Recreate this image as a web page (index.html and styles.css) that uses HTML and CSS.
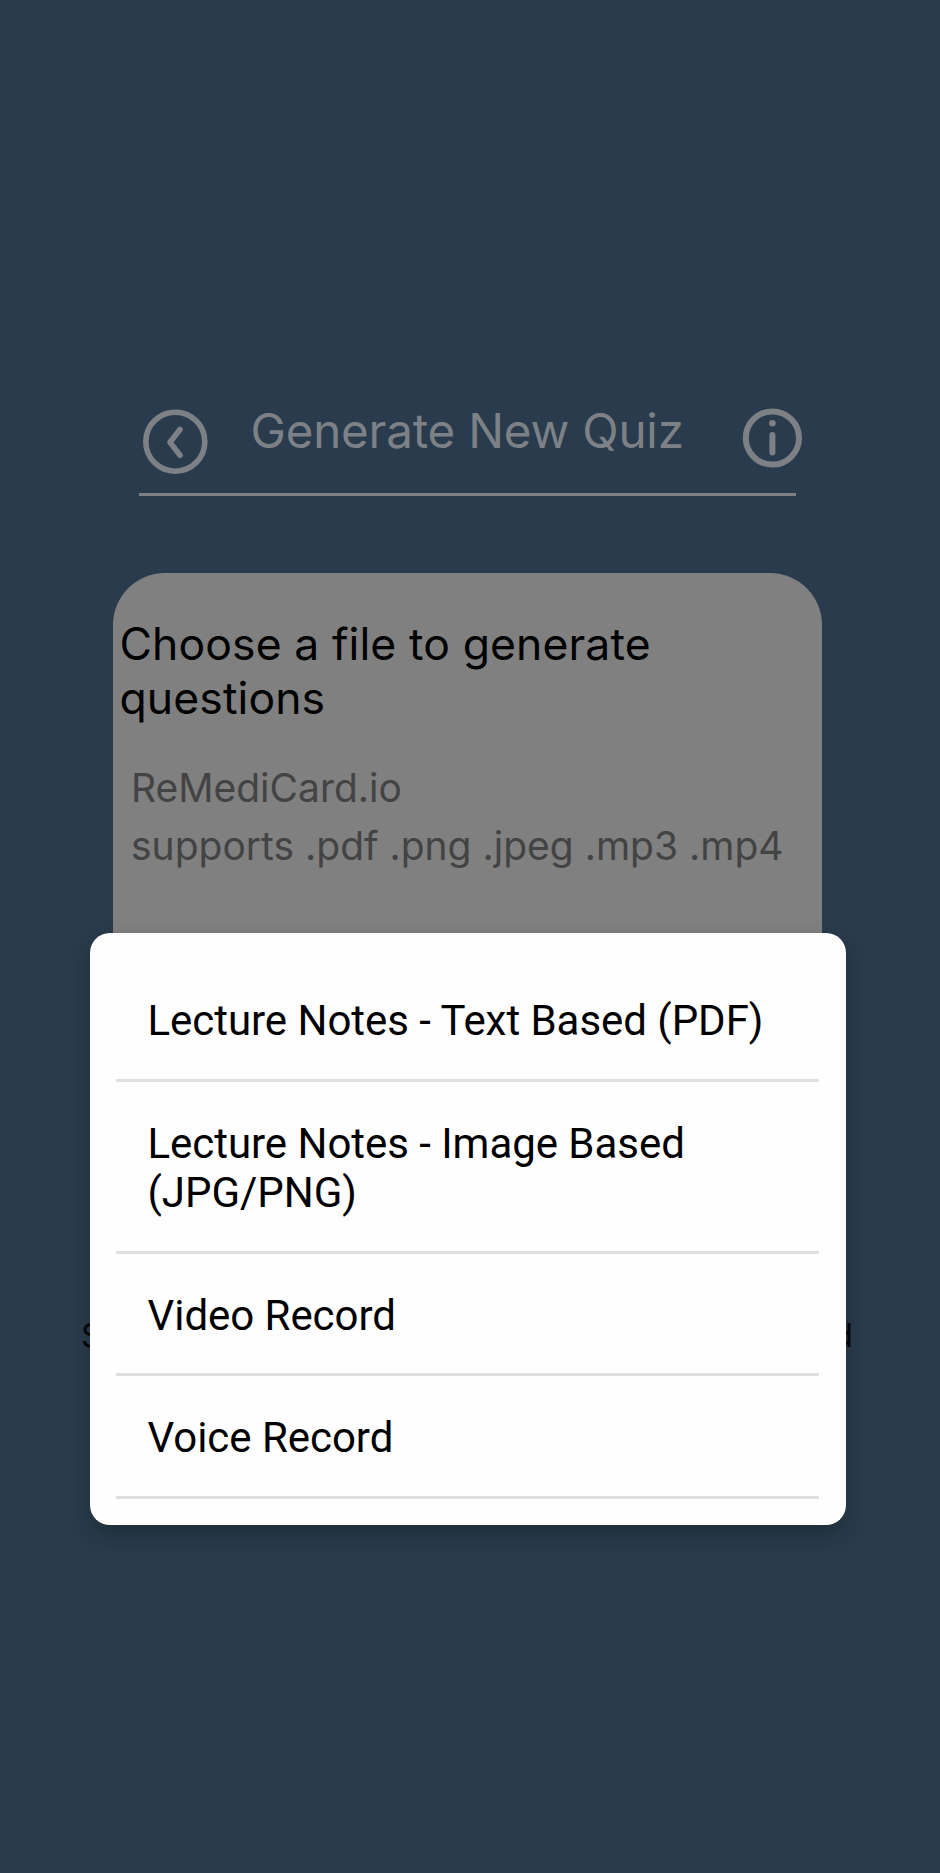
FILE: index.html
```html
<!DOCTYPE html>
<html lang="en">
<head>
<meta charset="utf-8">
<title>Generate New Quiz</title>
<link rel="stylesheet" href="styles.css">
</head>
<body>
<div class="screen">
  <header class="header">
    <svg class="back" viewBox="0 0 66 66" fill="none" stroke="currentColor">
      <circle cx="33.3" cy="32.7" r="29.5" stroke-width="5.6"/>
      <path d="M38 20.5 L28 33.3 L38 46.3" stroke-width="5.6" stroke-linecap="round" stroke-linejoin="round"/>
    </svg>
    <h1 class="title"><span>Generate New Quiz</span></h1>
    <svg class="info" viewBox="0 0 60 60" fill="none" stroke="currentColor">
      <circle cx="30.4" cy="30" r="26.6" stroke-width="6"/>
      <path d="M30.4 27 V44.4" stroke-width="6" stroke-linecap="round"/>
      <circle cx="30.4" cy="15.2" r="3.3" fill="currentColor" stroke="none"/>
    </svg>
  </header>
  <main class="card">
    <h2 class="heading"><span>Choose a file to generate</span><br><span>questions</span></h2>
    <p class="support"><span>ReMediCard.io</span><br><span>supports .pdf .png .jpeg .mp3 .mp4</span></p>
  </main>
  <div class="caption"><span>S</span><span>d</span></div>
  <ul class="menu">
    <li class="item"><span>Lecture Notes - Text Based (PDF)</span></li>
    <li class="item"><span>Lecture Notes - Image Based<br>(JPG/PNG)</span></li>
    <li class="item"><span>Video Record</span></li>
    <li class="item"><span>Voice Record</span></li>
  </ul>
</div>
</body>
</html>
```
FILE: styles.css
```css
* { box-sizing: border-box; }
body { margin: 0; background: #293b4c; }
.screen {
  position: relative;
  width: 940px;
  height: 1873px;
  padding-top: 403px;
  overflow: hidden;
  background: #293b4c;
  font-family: Inter, "Liberation Sans", sans-serif;
}
.header {
  display: flex;
  align-items: flex-start;
  width: 657px;
  height: 93px;
  margin-left: 139px;
  padding-left: 3px;
  border-bottom: 3px solid #7d8186;
  color: #7d8186;
}
.back { flex: none; width: 66px; height: 66px; margin-top: 6px; }
.info { flex: none; width: 60px; height: 60px; margin: 5px -6px 0 auto; }
.title {
  flex: none;
  margin: 0 0 0 42.5px;
  font-size: 47.5px;
  line-height: 56px;
  font-weight: 400;
  letter-spacing: -0.2px;
  white-space: nowrap;
}
.card {
  width: 709px;
  height: 560px;
  margin: 77px 0 0 113px;
  padding: 45px 0 0 6.5px;
  border-radius: 52px;
  background: #808080;
}
.heading {
  margin: 0;
  font-size: 44.5px;
  line-height: 53.5px;
  font-weight: 400;
  letter-spacing: 0.1px;
  color: #000;
  white-space: nowrap;
}
.support {
  margin: 34px 0 0 11.5px;
  font-size: 39px;
  line-height: 58px;
  color: #434343;
  white-space: nowrap;
}
.caption {
  display: flex;
  justify-content: space-between;
  width: 772px;
  margin: 182px 0 0 81px;
  font-size: 33px;
  line-height: 40px;
  color: #05070a;
}
.menu {
  position: absolute;
  left: 89.5px;
  top: 932.5px;
  width: 756px;
  height: 592.5px;
  margin: 0;
  padding: 26.5px 26.5px 0;
  list-style: none;
  border-radius: 20px;
  background: #fefefe;
  box-shadow: 0 10px 22px rgba(0, 0, 0, 0.24);
  font-family: Roboto, sans-serif;
}
.item {
  padding: 37px 0 32.6px 31.5px;
  border-bottom: 3px solid #e0e0e0;
  font-size: 42px;
  line-height: 49.9px;
  letter-spacing: -0.04px;
  color: #000;
  white-space: nowrap;
}
```
